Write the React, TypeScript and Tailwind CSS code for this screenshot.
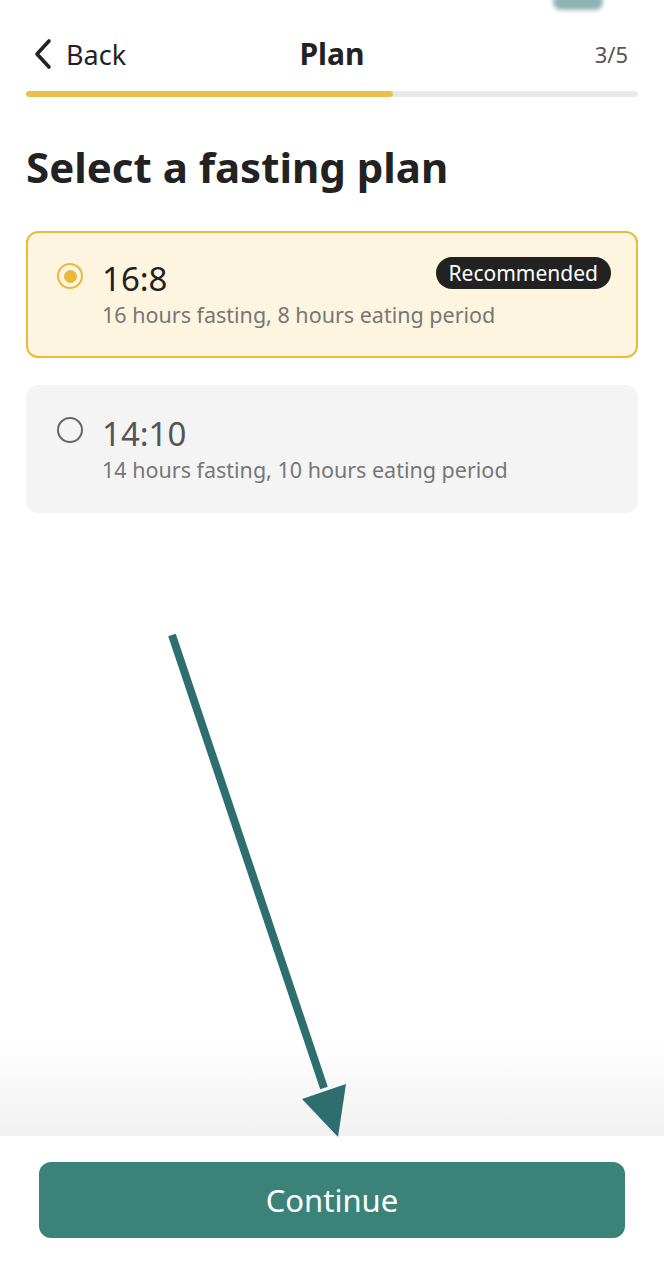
import React from "react";

export default function App() {
  const font = { fontFamily: "'Noto Sans', Roboto, sans-serif" };
  return (
    <div className="relative w-[664px] h-[1280px] bg-white overflow-hidden" style={font}>
      {/* top blob */}
      <div className="absolute left-[553px] top-[-6px] w-[50px] h-[16px] rounded-full bg-[#8fb3b3] blur-[2px]" />

      <div className="flex flex-col px-[26px]">
        {/* header */}
        <div className="flex items-center justify-between h-[54px] mt-[27px]">
          <div className="flex items-center gap-[12px] w-[150px]">
            <svg width="22" height="32" viewBox="0 0 22 32" className="ml-[6px]">
              <path d="M17 3 L5 16 L17 29" fill="none" stroke="#222" strokeWidth="3.6" strokeLinecap="round" strokeLinejoin="round" />
            </svg>
            <span className="text-[27px] text-[#222] leading-none">Back</span>
          </div>
          <span className="text-[30px] font-bold text-[#222] leading-none">Plan</span>
          <span className="w-[150px] text-right text-[22px] text-[#555] leading-none pr-[10px]">3/5</span>
        </div>

        {/* progress */}
        <div className="mt-[10px] h-[6px] w-full rounded-full bg-[#e8e8e8] overflow-hidden">
          <div className="h-full w-[60%] rounded-full bg-[#ebc04a]" />
        </div>

        <h1 className="mt-[49px] text-[42px] font-bold text-[#222] leading-none">Select a fasting plan</h1>

        {/* card 1 */}
        <div className="mt-[43px] h-[127px] rounded-[12px] border-2 border-[#e6bb3e] bg-[#fdf5e0] flex items-start px-[29px] pt-[24px]">
          <div className="mt-[6px] w-[26px] h-[26px] rounded-full border-[2.5px] border-[#e6b93a] flex items-center justify-center">
            <div className="w-[13px] h-[13px] rounded-full bg-[#e6b93a]" />
          </div>
          <div className="ml-[19px] flex-1 flex flex-col">
            <div className="flex items-start justify-between">
              <span className="text-[33px] text-[#222] leading-none mt-[5px]">16:8</span>
              <span className="h-[32px] px-[13px] rounded-full bg-[#222] text-white text-[21px] leading-none flex items-center mr-[-4px]">Recommended</span>
            </div>
            <span className="mt-[9px] text-[21.5px] text-[#777] leading-none">16 hours fasting, 8 hours eating period</span>
          </div>
        </div>

        {/* card 2 */}
        <div className="mt-[27px] h-[128px] rounded-[12px] bg-[#f4f4f4] flex items-start px-[31px] pt-[32px]">
          <div className="w-[26px] h-[26px] rounded-full border-[2.5px] border-[#666]" />
          <div className="ml-[19px] flex flex-col">
            <span className="text-[33px] text-[#555] leading-none">14:10</span>
            <span className="mt-[9px] text-[21.5px] text-[#777] leading-none">14 hours fasting, 10 hours eating period</span>
          </div>
        </div>
      </div>

      {/* bottom fade */}
      <div className="absolute left-0 right-0 top-[1040px] h-[96px] bg-gradient-to-b from-white to-[#f1f1f1]" />
      <div className="absolute left-0 right-0 top-[1136px] bottom-0 bg-white flex flex-col items-center">
        <button className="mt-[26px] w-[586px] h-[76px] rounded-[12px] bg-[#3b8378] text-white text-[31px] leading-none">Continue</button>
      </div>

      {/* arrow */}
      <svg className="absolute left-0 top-0" width="664" height="1280" viewBox="0 0 664 1280">
        <line x1="172" y1="635" x2="324" y2="1088" stroke="#2e6e6e" strokeWidth="8" />
        <polygon points="302,1099 346,1084 338,1137" fill="#2e6e6e" />
      </svg>
    </div>
  );
}
